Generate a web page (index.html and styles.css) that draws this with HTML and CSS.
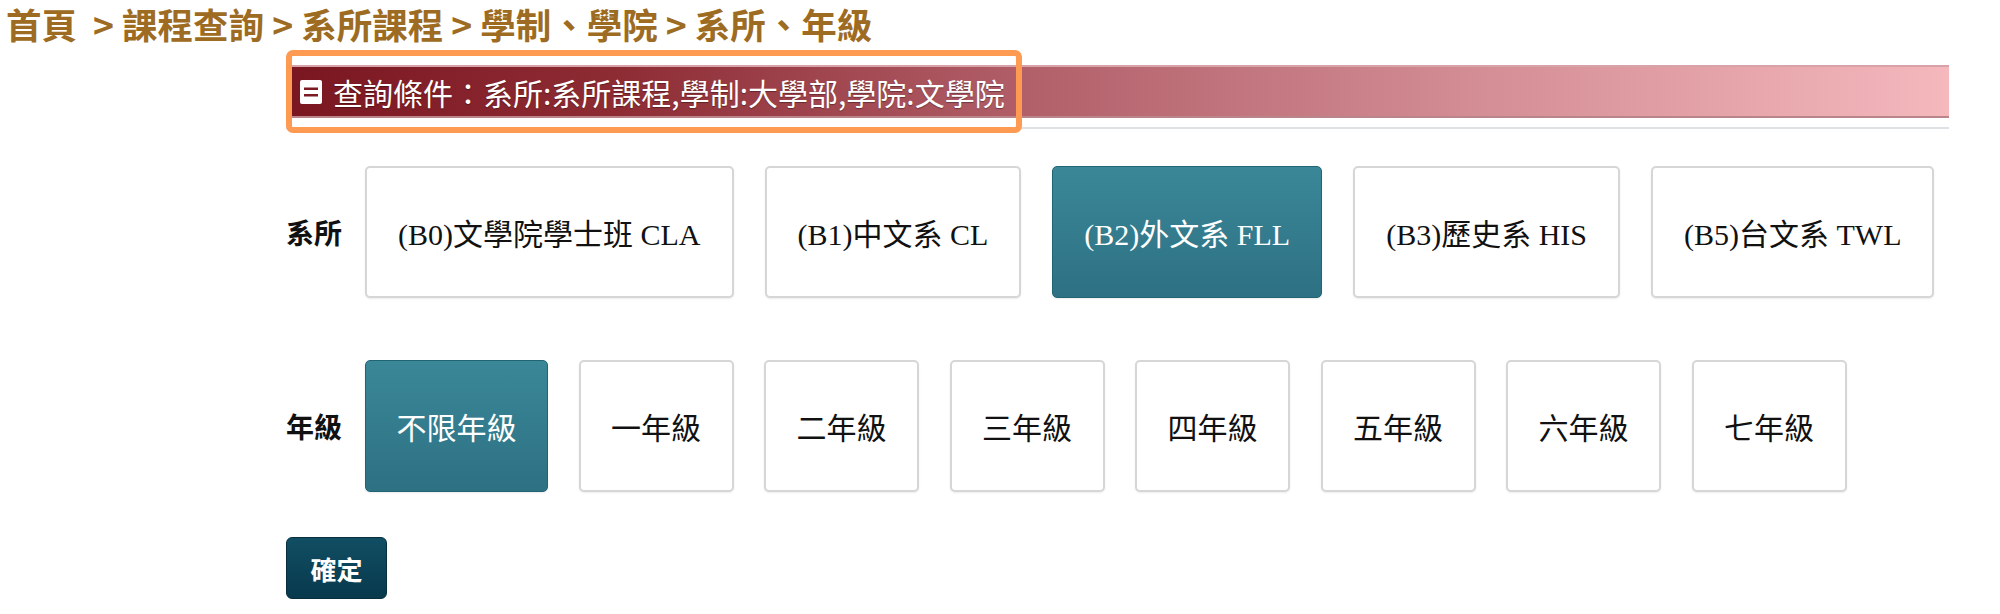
FILE: index.html
```html
<!DOCTYPE html>
<html lang="zh-Hant">
<head>
<meta charset="utf-8">
<title>系所、年級</title>
<link rel="stylesheet" href="styles.css">
</head>
<body>
<div class="crumbs">首頁&nbsp; &gt; 課程查詢 &gt; 系所課程 &gt; 學制、學院 &gt; 系所、年級</div>
<div class="panel">
  <div class="titlewrap">
    <div class="titlebar">
      <svg class="ticon" width="22" height="24" viewBox="0 0 22 24"><rect x="0" y="0" width="22" height="24" rx="2" fill="#fff"/><rect x="4" y="7.5" width="14" height="2.5" fill="#7b1a22"/><rect x="4" y="14" width="14" height="2.5" fill="#7b1a22"/></svg>
      <span class="ttext">查詢條件：系所:系所課程,學制:大學部,學院:文學院</span>
    </div>
    <div class="highlight"></div>
  </div>
  <div class="rule"></div>
  <div class="row row-dept">
    <div class="label">系所</div>
    <div class="opts">
      <button class="opt">(B0)文學院學士班 CLA</button>
      <button class="opt">(B1)中文系 CL</button>
      <button class="opt on">(B2)外文系 FLL</button>
      <button class="opt">(B3)歷史系 HIS</button>
      <button class="opt">(B5)台文系 TWL</button>
    </div>
  </div>
  <div class="row row-grade">
    <div class="label">年級</div>
    <div class="opts opts-grade">
      <button class="opt grade on">不限年級</button>
      <button class="opt grade">一年級</button>
      <button class="opt grade">二年級</button>
      <button class="opt grade">三年級</button>
      <button class="opt grade">四年級</button>
      <button class="opt grade">五年級</button>
      <button class="opt grade">六年級</button>
      <button class="opt grade">七年級</button>
    </div>
  </div>
  <button class="confirm">確定</button>
</div>
</body>
</html>
```
FILE: styles.css
```css
html, body {
  margin: 0;
  padding: 0;
  background: #fff;
}
body {
  font-family: "Noto Sans CJK TC", "Noto Sans", sans-serif;
  width: 2000px;
  height: 614px;
  overflow: hidden;
}
.crumbs {
  padding: 3px 0 0 6px;
  height: 45px;
  font-size: 35.5px;
  line-height: 42px;
  font-weight: 700;
  color: #9d6c22;
  white-space: nowrap;
}
.panel {
  margin-left: 286px;
  width: 1663px;
  display: flex;
  flex-direction: column;
  align-items: flex-start;
}
.titlewrap {
  position: relative;
  width: 100%;
  margin-top: 17px;
}
.titlebar {
  height: 53px;
  box-sizing: border-box;
  border-top: 2px solid #d7a2a8;
  border-bottom: 2px solid #b9858b;
  background: linear-gradient(to right, #7a1620 0%, #8e2c34 20%, #b2606a 45%, #d48e95 72%, #f4b8bd 100%);
  display: flex;
  align-items: center;
  padding-left: 14px;
  gap: 11px;
  color: #fff;
}
.ticon {
  flex: none;
}
.ttext {
  font-size: 30px;
  line-height: 1;
  white-space: nowrap;
  text-shadow: 0 1px 1px rgba(0,0,0,0.35);
}
.highlight {
  position: absolute;
  left: 0;
  top: -15px;
  width: 736px;
  height: 83px;
  box-sizing: border-box;
  border: 6px solid #ff9a52;
  border-radius: 7px;
}
.rule {
  width: 100%;
  height: 2px;
  background: #dfe2e4;
  margin-top: 9px;
}
.row {
  display: flex;
  align-items: center;
  margin-top: 37px;
}
.row-grade {
  margin-top: 62px;
}
.label {
  width: 79px;
  flex: none;
  font-size: 28px;
  font-weight: 700;
  color: #111;
  white-space: nowrap;
}
.opts {
  display: flex;
  gap: 31px;
}
.opts-grade {
  gap: 30.5px;
}
.opt {
  height: 132px;
  padding: 0 31px;
  box-sizing: border-box;
  border: 2px solid #d6d6d6;
  border-radius: 5px;
  background: #fff;
  box-shadow: 0 1px 2px rgba(0,0,0,0.08);
  font-family: "Liberation Serif", "Noto Sans CJK TC", serif;
  font-size: 30px;
  color: #111;
  white-space: nowrap;
  cursor: pointer;
}
.opt.grade {
  padding: 0 30.5px;
}
.opt.on {
  background: linear-gradient(to bottom, #3a8798 0%, #2d7183 100%);
  border: 1px solid #216474;
  color: #fff;
}
.confirm {
  margin-top: 45px;
  width: 101px;
  height: 62px;
  border: 1px solid #062e3d;
  border-radius: 6px;
  background: linear-gradient(to bottom, #114e63 0%, #08394d 100%);
  color: #fff;
  font-family: "Noto Sans CJK TC", sans-serif;
  font-size: 26px;
  font-weight: 700;
  padding: 0;
  cursor: pointer;
}
```
